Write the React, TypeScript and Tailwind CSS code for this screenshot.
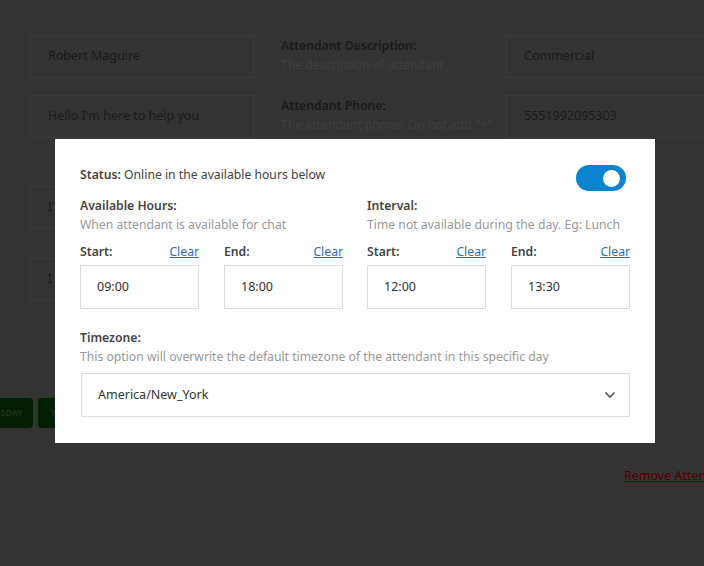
import React from 'react';

const font = { fontFamily: '"Noto Sans", "Open Sans", Arial, sans-serif' };

function BgInput({ value, className = '' }: { value: string; className?: string }) {
  return (
    <div className={`shrink-0 h-[43px] border border-[#3a3a3a] flex items-center pl-[17px] text-[12.5px] text-[#1c1c1c] ${className}`}>
      {value}
    </div>
  );
}

function TimeField({ label, value }: { label: string; value: string }) {
  return (
    <div className="flex flex-col w-[119px]">
      <div className="flex justify-between items-end h-[19px] text-[12.2px] leading-[19px]">
        <span className="font-semibold text-[#444]">{label}</span>
        <a href="#" className="text-[#2a6ebb] underline">Clear</a>
      </div>
      <div className="mt-[4px] h-[44px] border border-[#ddd] flex items-center pl-[16px] text-[12.5px] text-[#333]">
        {value}
      </div>
    </div>
  );
}

export default function App() {
  return (
    <div className="relative w-[704px] h-[566px] overflow-hidden bg-[#333]" style={font}>
      {/* Page behind the overlay */}
      <div className="pt-[35px] pl-[30px]">
        <div className="flex">
          <BgInput value="Robert Maguire" className="w-[224px]" />
          <div className="shrink-0 ml-[27px] w-[225px] pt-[1px] text-[12.2px] leading-[19px] whitespace-nowrap">
            <div className="font-semibold text-[#1c1c1c]">Attendant Description:</div>
            <div className="text-[#3e3e3e]">The description of attendant</div>
          </div>
          <BgInput value="Commercial" className="w-[220px]" />
        </div>
        <div className="flex mt-[17px]">
          <BgInput value="Hello I'm here to help you" className="w-[224px]" />
          <div className="shrink-0 ml-[27px] w-[225px] pt-[1px] text-[12.2px] leading-[19px] whitespace-nowrap">
            <div className="font-semibold text-[#1c1c1c]">Attendant Phone:</div>
            <div className="text-[#3e3e3e]">The attendant phone. Do not add "+"</div>
          </div>
          <BgInput value="5551992095303" className="w-[220px]" />
        </div>
        <div className="flex mt-[48px]">
          <BgInput value="I'm" className="w-[224px]" />
        </div>
        <div className="flex mt-[29px]">
          <BgInput value="I" className="w-[224px]" />
        </div>
      </div>
      <div className="flex gap-[5px] mt-[97px] text-[9px] font-bold">
        <div className="w-[33px] h-[30px] bg-[#031f03] rounded-r-[4px] flex items-center justify-end pr-[10px] text-[#1b321b] overflow-hidden whitespace-nowrap">
          SDAY
        </div>
        <div className="w-[40px] h-[30px] bg-[#031f03] rounded-[4px] flex items-center pl-[13px] text-[#1b321b]">
          T
        </div>
      </div>
      <div className="mt-[39px] pl-[624px] text-[12.5px] whitespace-nowrap">
        <a href="#" className="text-[#560000] underline">Remove Attendant</a>
      </div>

      {/* Modal */}
      <div className="absolute left-[55px] top-[139px] w-[600px] bg-white px-[25px] pt-[26px] pb-[26px]">
        <div className="flex justify-between items-start">
          <div className="text-[12.2px] leading-[19px] text-[#444]">
            <span className="font-semibold">Status:</span> Online in the available hours below
          </div>
          <div className="mr-[4px] w-[50px] h-[26px] rounded-full bg-[#0a84ce] flex items-center justify-end pr-[6px]">
            <div className="w-[17px] h-[17px] rounded-full bg-white" />
          </div>
        </div>
        <div className="flex gap-[24px] mt-[5px]">
          <div className="w-[263px]">
            <div className="text-[12.2px] leading-[19px] font-semibold text-[#444]">Available Hours:</div>
            <div className="text-[12.2px] leading-[19px] text-[#999] whitespace-nowrap">When attendant is available for chat</div>
            <div className="flex gap-[25px] mt-[8px]">
              <TimeField label="Start:" value="09:00" />
              <TimeField label="End:" value="18:00" />
            </div>
          </div>
          <div className="w-[263px]">
            <div className="text-[12.2px] leading-[19px] font-semibold text-[#444]">Interval:</div>
            <div className="text-[12.2px] leading-[19px] text-[#999] whitespace-nowrap">Time not available during the day. Eg: Lunch</div>
            <div className="flex gap-[25px] mt-[8px]">
              <TimeField label="Start:" value="12:00" />
              <TimeField label="End:" value="13:30" />
            </div>
          </div>
        </div>
        <div className="mt-[19px] text-[12.2px] leading-[19px] font-semibold text-[#444]">Timezone:</div>
        <div className="text-[12.2px] leading-[19px] text-[#999] whitespace-nowrap">
          This option will overwrite the default timezone of the attendant in this specific day
        </div>
        <div className="mt-[7px] ml-[1px] h-[44px] border border-[#ddd] flex items-center justify-between pl-[16px] pr-[13px] text-[12.5px] text-[#333]">
          <span>America/New_York</span>
          <svg width="12" height="8" viewBox="0 0 12 8" fill="none">
            <path d="M1.5 1.5 L6 6 L10.5 1.5" stroke="#555" strokeWidth="1.6" />
          </svg>
        </div>
      </div>
    </div>
  );
}
